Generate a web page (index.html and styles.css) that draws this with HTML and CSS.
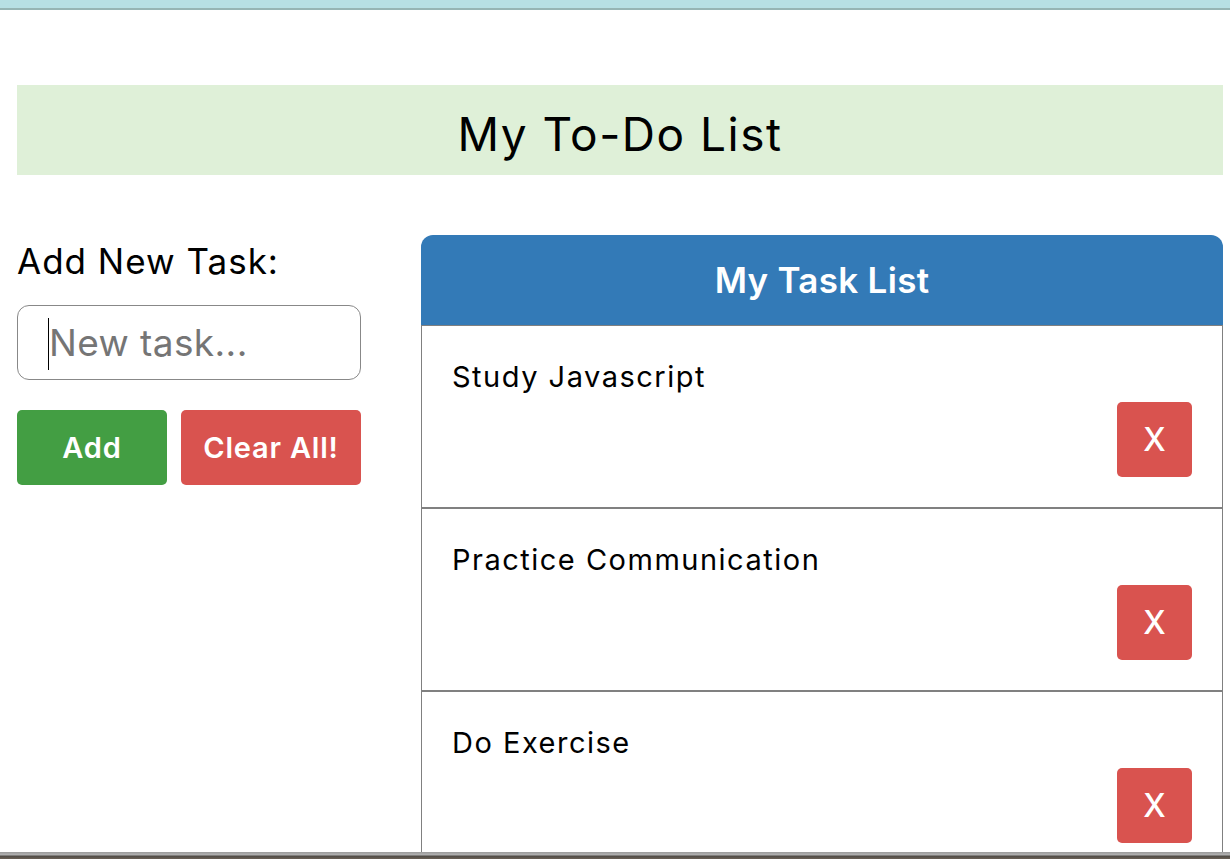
FILE: index.html
```html
<!DOCTYPE html>
<html lang="en">
<head>
<meta charset="utf-8">
<title>My To-Do List</title>
<link rel="stylesheet" href="styles.css">
</head>
<body>
<div class="chrome-top"></div>
<div class="page">
  <header class="banner"><h1 class="banner-title">My To-Do List</h1></header>
  <main class="main">
    <section class="add-panel">
      <label class="add-label" for="task">Add New Task:</label>
      <div class="input-box"><span class="caret"></span><input id="task" class="task-input" type="text" placeholder="New task..."></div>
      <div class="btn-row">
        <button class="btn btn-add">Add</button>
        <button class="btn btn-clear">Clear All!</button>
      </div>
    </section>
    <section class="list-panel">
      <div class="list-head">My Task List</div>
      <ul class="task-list">
        <li class="task"><span class="task-text">Study Javascript</span><button class="btn-x">X</button></li>
        <li class="task"><span class="task-text">Practice Communication</span><button class="btn-x">X</button></li>
        <li class="task"><span class="task-text">Do Exercise</span><button class="btn-x">X</button></li>
      </ul>
    </section>
  </main>
</div>
<div class="chrome-bottom"></div>
</body>
</html>
```
FILE: styles.css
```css
* { box-sizing: border-box; }
html, body { margin: 0; padding: 0; height: 100%; overflow: hidden; }
body {
  font-family: "Inter", "Open Sans", sans-serif;
  color: #000;
  background: #fff;
}
.chrome-top {
  height: 10px;
  background: #b7e0e4;
  border-bottom: 2px solid #96b5b4;
}
.page { padding: 75px 7px 0 17px; }
.banner {
  background: #dff0d8;
  height: 90px;
  display: flex;
  align-items: center;
  justify-content: center;
}
.banner-title {
  margin: 0;
  font-weight: 400;
  font-size: 46px;
  line-height: 1;
  letter-spacing: 1.5px;
  padding-top: 7px;
}
.main {
  display: flex;
  gap: 60px;
  margin-top: 60px;
}
.add-panel { width: 344px; flex: none; }
.add-label {
  display: block;
  font-size: 35px;
  line-height: 40px;
  margin-top: 6px;
  letter-spacing: 1px;
}
.input-box {
  position: relative;
  margin-top: 24px;
  height: 75px;
  border: 1px solid #888;
  border-radius: 12px;
  display: flex;
  align-items: center;
  padding-left: 31px;
}
.caret {
  position: absolute;
  left: 30px;
  top: 12px;
  width: 1px;
  height: 52px;
  background: #000;
}
.task-input {
  border: none;
  outline: none;
  background: transparent;
  font-family: inherit;
  font-size: 37px;
  letter-spacing: 0.4px;
  width: 100%;
  padding: 0;
  color: #000;
}
.task-input::placeholder { color: #757575; }
.btn-row { display: flex; gap: 14px; margin-top: 30px; }
.btn {
  height: 75px;
  border: none;
  border-radius: 5px;
  color: #fff;
  font-family: inherit;
  font-weight: 600;
  font-size: 29px;
  letter-spacing: 0.8px;
  padding: 0;
}
.btn-add { width: 150px; background: #439e43; }
.btn-clear { width: 180px; background: #d9534f; }
.list-panel { width: 802px; flex: none; }
.list-head {
  height: 90px;
  background: #337ab7;
  border-radius: 12px 12px 0 0;
  color: #fff;
  font-weight: 600;
  font-size: 35px;
  letter-spacing: 0.3px;
  display: flex;
  align-items: center;
  justify-content: center;
}
.task-list { list-style: none; margin: 0; padding: 0; }
.task {
  height: 183px;
  border: 1px solid #808080;
  padding: 30px;
  display: flex;
  flex-direction: column;
}
.task-text {
  font-size: 29px;
  line-height: 42px;
  letter-spacing: 1.5px;
}
.btn-x {
  align-self: flex-end;
  margin-top: 4px;
  width: 75px;
  height: 75px;
  border: none;
  border-radius: 5px;
  background: #d9534f;
  color: #fff;
  font-family: inherit;
  font-size: 32px;
  font-weight: 500;
  padding: 0;
}
.chrome-bottom {
  position: fixed;
  left: 0;
  right: 0;
  bottom: 0;
  height: 7px;
  background: linear-gradient(#9a9a9a 0, #b2b2b2 3px, #4e4a45 4px, #6a6055 7px);
}
```
